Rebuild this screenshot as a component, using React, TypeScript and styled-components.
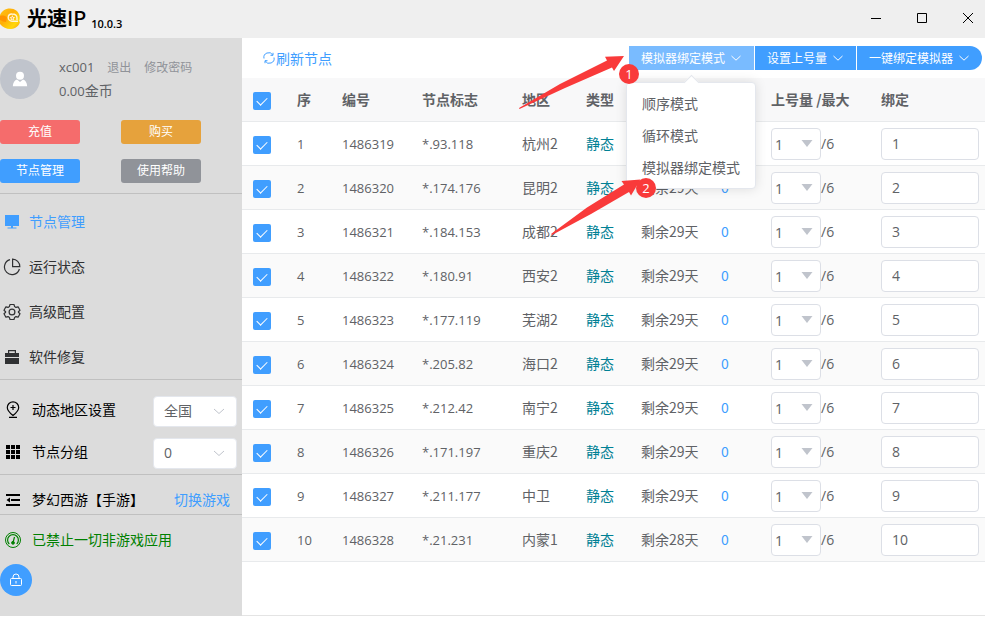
import React from "react";
import styled, { createGlobalStyle, css } from "styled-components";

const GlobalStyle = createGlobalStyle`
  * { box-sizing: border-box; }
  body {
    margin: 0;
    background: #fff;
    color: #606266;
    font: 14px/20px "Noto Sans CJK SC", sans-serif;
  }
  button, input, select { font: inherit; margin: 0; }
  button { cursor: pointer; }
`;

const LATIN = `"Open Sans", "Noto Sans CJK SC", sans-serif`;
const BLUE = "#409eff";

const Shell = styled.div`
  min-height: 100vh;
  display: flex;
  flex-direction: column;
  padding-bottom: 1px;
  position: relative;
`;

const TitleBar = styled.header`
  display: flex;
  justify-content: space-between;
  height: 38px;
  background: #efefef;
  color: #000;
`;

const Brand = styled.div`
  display: flex;
  align-items: flex-start;
  svg { display: block; margin: 8px 6px 0 0; }
`;

const AppName = styled.h1`
  margin: 0;
  font-size: 20px;
  line-height: 36px;
  font-weight: 700;
  span { font-weight: 500; }
`;

const Version = styled.small`
  align-self: flex-end;
  margin-left: 5px;
  padding-bottom: 4px;
  font: 600 11px/20px ${LATIN};
`;

const WindowButtons = styled.div`
  display: flex;
  margin-right: -6px;
  overflow: hidden;
`;

const WindowButton = styled.button`
  width: 46px;
  height: 36px;
  padding: 0;
  border: 0;
  background: none;
  display: grid;
  place-items: center;
`;

const Body = styled.div`
  flex: 1;
  display: flex;
`;

const Sidebar = styled.aside`
  width: 242px;
  flex: none;
  background: #dcdcdc;
  color: #000;
`;

const Section = styled.section<{ $top?: number }>`
  padding-top: ${(p) => p.$top ?? 0}px;
  border-bottom: 1px solid #c0c0c0;
`;

const Account = styled.div`
  display: flex;
  align-items: center;
  gap: 19px;
  height: 42px;
`;

const Avatar = styled.div`
  width: 40px;
  height: 40px;
  border-radius: 50%;
  background: #c0c4cc;
  display: grid;
  place-items: center;
`;

const AccountLine = styled.div`
  display: flex;
  align-items: center;
  height: 24px;
  font-family: ${LATIN};
  font-size: 13px;
  color: #606266;
  b { font-size: 14px; font-weight: 400; }
`;

const MutedLink = styled.a`
  margin-left: 13px;
  padding-top: 2px;
  font-size: 12px;
  color: #909399;
  text-decoration: none;
`;

const ActionGrid = styled.div`
  display: grid;
  grid-template-columns: 1fr 1fr;
  row-gap: 15px;
  padding: 20px 0 10px;
`;

const ActionButton = styled.button<{ $color: string }>`
  width: 80px;
  height: 24px;
  padding: 0 0 2px;
  border: 0;
  border-radius: 3px;
  background: ${(p) => p.$color};
  color: #fff;
  font-size: 12px;
  line-height: 22px;
`;

const Caption = styled.span`
  padding-bottom: 2px;
`;

const NavLink = styled.a<{ $active?: boolean }>`
  display: flex;
  align-items: center;
  gap: 8px;
  height: 45px;
  padding-left: 3px;
  color: ${(p) => (p.$active ? BLUE : "#303133")};
  text-decoration: none;
  svg { display: block; }
`;

const SettingRow = styled.div`
  display: flex;
  align-items: center;
  height: 42px;
  padding: 0 5px 0 4px;
`;

const RowLabel = styled.label`
  flex: 1;
  display: flex;
  align-items: center;
  gap: 10px;
  padding-bottom: 3px;
`;

const SelectBox = styled.span<{ $width: number; $height: number }>`
  display: inline-grid;
  width: ${(p) => p.$width}px;
  height: ${(p) => p.$height}px;
  align-items: center;
  > * { grid-area: 1 / 1; }
  svg { justify-self: end; pointer-events: none; }
`;

const Select = styled.select<{ $tight?: boolean }>`
  appearance: none;
  width: 100%;
  height: 100%;
  border: 1px solid ${(p) => (p.$tight ? "#dcdfe6" : "#e4e7ed")};
  border-radius: 4px;
  background: #fff;
  color: #606266;
  padding: ${(p) => (p.$tight ? "2px 0 0 3px" : "0 0 0 10px")};
  font-family: ${LATIN};
`;

const SmallChevron = styled.svg`
  margin-right: 12px;
`;

const Caret = styled.svg`
  margin: 0 8px 0 0;
`;

const Quota = styled.div`
  display: flex;
  align-items: center;
`;

const GameRow = styled.div`
  display: flex;
  align-items: center;
  gap: 10px;
  height: 28px;
  padding: 0 12px 0 4px;
  a { margin-left: auto; padding-bottom: 2px; color: ${BLUE}; text-decoration: none; }
`;

const StatusRow = styled.p`
  display: flex;
  align-items: center;
  gap: 10px;
  height: 49px;
  margin: 0;
  padding-left: 4px;
  color: #008000;
`;

const LockButton = styled.button`
  width: 32px;
  height: 32px;
  padding: 0;
  border: 0;
  border-radius: 50%;
  background: ${BLUE};
  display: grid;
  place-items: center;
`;

const Main = styled.main`
  flex: 1;
  min-width: 0;
  border-bottom: 1px solid #e4e4e4;
`;

const Toolbar = styled.div`
  display: flex;
  justify-content: space-between;
  align-items: center;
  height: 40px;
  padding: 0 3px 0 21px;
`;

const RefreshButton = styled.button`
  display: flex;
  align-items: center;
  gap: 1px;
  padding: 0;
  border: 0;
  background: none;
  color: ${BLUE};
`;

const Menus = styled.div`
  display: flex;
  gap: 1px;
`;

const MenuAnchor = styled.div`
  position: relative;
`;

const MenuButton = styled.button<{ $open?: boolean; $last?: boolean }>`
  display: flex;
  align-items: center;
  gap: 5px;
  height: 24px;
  padding: 0 12px;
  border: 0;
  border-radius: ${(p) => (p.$last ? "0 12px 12px 0" : "0")};
  background: ${(p) => (p.$open ? "#79bbff" : BLUE)};
  color: #fff;
  font-size: 12px;
  line-height: 24px;
  white-space: nowrap;
`;

const Popup = styled.ul`
  position: absolute;
  z-index: 2;
  top: 36px;
  left: -3px;
  margin: 0;
  padding: 4px 0 5px;
  list-style: none;
  background: #fff;
  border: 1px solid #e4e7ed;
  border-radius: 4px;
  box-shadow: 0 0 12px rgba(0, 0, 0, 0.12);
  &::before {
    content: "";
    position: absolute;
    top: -6px;
    left: 50%;
    width: 10px;
    height: 10px;
    margin-left: -5px;
    transform: rotate(45deg);
    background: #fff;
    border: solid #e4e7ed;
    border-width: 1px 0 0 1px;
  }
`;

const PopupItem = styled.button`
  display: block;
  position: relative;
  width: 100%;
  padding: 0 15px;
  border: 0;
  background: none;
  color: #606266;
  line-height: 32px;
  text-align: left;
  white-space: nowrap;
`;

const Table = styled.table`
  width: 100%;
  table-layout: fixed;
  border-collapse: separate;
  border-spacing: 0;
`;

const Column = styled.col<{ $width?: number }>`
  ${(p) => p.$width && css`width: ${p.$width}px;`}
`;

const Row = styled.tr<{ $striped?: boolean }>`
  height: 44px;
  background: ${(p) => (p.$striped ? "#fafafa" : "#fff")};
`;

const cell = css`
  padding: 0 0 2px 10px;
  border-bottom: 1px solid #e8eaec;
  text-align: left;
  white-space: nowrap;
  vertical-align: middle;
`;

const HeadCell = styled.th<{ $control?: boolean }>`
  ${cell}
  ${(p) => p.$control && css`padding-bottom: 0;`}
  background: #f8f8f9;
  font-weight: 700;
`;

const Cell = styled.td<{ $tone?: string; $number?: boolean; $control?: boolean }>`
  ${cell}
  ${(p) => p.$number && css`font: 13px/20px ${LATIN}; padding-bottom: 0;`}
  ${(p) => p.$control && css`font-family: ${LATIN}; padding-bottom: 0;`}
  color: ${(p) => p.$tone ?? "#606266"};
`;

const Check = styled.input`
  appearance: none;
  display: grid;
  place-items: center;
  width: 18px;
  height: 18px;
  margin: 2px 0 0 1px;
  border-radius: 2px;
  background: ${BLUE};
  &::after {
    content: "";
    width: 5px;
    height: 9px;
    margin-top: -2px;
    border: solid #fff;
    border-width: 0 1px 1px 0;
    transform: rotate(45deg);
  }
`;

const BindInput = styled.input`
  display: block;
  width: calc(100% - 6px);
  height: 32px;
  padding: 0 10px;
  border: 1px solid #dcdfe6;
  border-radius: 4px;
  background: #fff;
  color: #606266;
  font-family: ${LATIN};
`;

const Arrows = styled.svg`
  position: absolute;
  z-index: 3;
  top: 0;
  left: 0;
  pointer-events: none;
`;

const Badge = styled.span<{ $x: number; $y: number }>`
  position: absolute;
  z-index: 4;
  left: ${(p) => p.$x}px;
  top: ${(p) => p.$y}px;
  width: 20px;
  height: 20px;
  border-radius: 50%;
  background: #f93a3a;
  color: #fff;
  font: 13px/20px ${LATIN};
  text-align: center;
`;

const stroke = { fill: "none", stroke: "currentColor" } as const;

const Logo = () => (
  <svg width="21" height="22" viewBox="0 0 21 22" aria-hidden="true">
    <defs>
      <linearGradient id="gold" x1="0" y1="0" x2="1" y2="1">
        <stop offset="0" stopColor="#ffc414" />
        <stop offset=".4" stopColor="#ffae08" />
        <stop offset=".75" stopColor="#ffd80a" />
        <stop offset="1" stopColor="#ff9410" />
      </linearGradient>
    </defs>
    <path d="M0 7C2 3 5 .5 10 .5c5 0 8.500 3 9.500 7 .4 2 .3 4-.5 6h1c-.5 4-4 7-9 7.500-4 .3-8-1.500-11-5Z" fill="url(#gold)" />
    <path d="M0 8c3-1 5-.5 7 1.500L6 14c-2 0-4-1-6-2Z" fill="#ff9300" />
    <path d="M18 13.200h-6a3.800 3.800 0 0 1-3.800-3.700A3.700 3.700 0 0 1 12 6c3.200 0 5 1.200 5 4v2" fill="none" stroke="#fff4d6" strokeWidth="1.400" />
    <path d="m12.300 7 .9 1.900 2 .3-1.500 1.300.4 2-1.800-1-1.800 1 .4-2-1.500-1.300 2-.3Z" fill="#fff4d6" />
    <circle cx="12.300" cy="10" r=".8" fill="#ff9c08" />
  </svg>
);

const UserGlyph = () => (
  <svg width="16" height="16" viewBox="0 0 16 16" fill="#fff" aria-hidden="true">
    <circle cx="8" cy="4.800" r="4" />
    <path d="M5 8.500 8 11l3-2.500c2.300.6 4 3.200 4.200 6.700H.8C1 11.700 2.700 9.100 5 8.500Z" />
  </svg>
);

const MonitorIcon = () => (
  <svg width="18" height="18" viewBox="0 0 18 18" fill="currentColor" aria-hidden="true">
    <path d="M2 2h14v11H2zM8 13h2v1.500h3.500v1h-9v-1H8z" />
  </svg>
);

const PieIcon = () => (
  <svg width="18" height="18" viewBox="0 0 18 18" {...stroke} strokeWidth="1.200" aria-hidden="true">
    <path d="M7 1.700A7.600 7.600 0 1 0 16.400 11" />
    <path d="M9.600 1.200v7.400h7.200A7.400 7.400 0 0 0 9.600 1.200Z" />
  </svg>
);

const GearIcon = () => (
  <svg width="18" height="18" viewBox="0 0 18 18" {...stroke} strokeWidth="1.200" strokeLinejoin="round" aria-hidden="true">
    <path d="M7 1.500h4l.6 2.100 1.300.8 2.200-.6 1.900 3.400-1.600 1.500v.6l1.600 1.500-1.900 3.400-2.200-.6-1.300.8-.6 2.100H7l-.6-2.100-1.300-.8-2.200.6L1 10.800l1.600-1.500v-.6L1 7.200l1.900-3.400 2.200.6 1.300-.8Z" />
    <circle cx="9" cy="9" r="2.900" />
  </svg>
);

const CaseIcon = () => (
  <svg width="18" height="18" viewBox="0 0 18 18" fill="currentColor" aria-hidden="true">
    <path d="M5 5V2h8v3h3v4H2V5Zm1.200 0h5.600V3.200H6.200ZM2 10h14v6H2z" />
  </svg>
);

const PinIcon = () => (
  <svg width="18" height="18" viewBox="0 0 18 18" {...stroke} strokeWidth="1.200" aria-hidden="true">
    <path d="M9 14.500C5.500 11.700 3.300 9.300 3.300 6.500a5.700 5.700 0 0 1 11.400 0c0 2.800-2.200 5.200-5.700 8ZM9 4v5M6.500 6.500h5M5 16.400h8" />
  </svg>
);

const GridIcon = () => (
  <svg width="18" height="18" viewBox="0 0 18 18" fill="currentColor" aria-hidden="true">
    {[2, 7, 12].map((y) => [2, 7, 12].map((x) => <rect key={`${x}-${y}`} x={x} y={y} width="4" height="4" />))}
  </svg>
);

const FoldIcon = () => (
  <svg width="18" height="18" viewBox="0 0 18 18" fill="currentColor" aria-hidden="true">
    <path d="M2 3h14v2H2zM7 8h9v2H7zM2 13h14v2H2zM2.500 9 6 6.500v5Z" />
  </svg>
);

const GaugeIcon = () => (
  <svg width="18" height="18" viewBox="0 0 18 18" {...stroke} aria-hidden="true">
    <circle cx="9" cy="9" r="7.500" />
    <path d="M5.300 13A5.400 5.400 0 1 1 12.700 13M9.300 10.500 10.500 6" strokeWidth="1.200" />
    <circle cx="9" cy="11.800" r="1.400" fill="currentColor" />
  </svg>
);

const LockIcon = () => (
  <svg width="14" height="14" viewBox="0 0 14 14" fill="none" stroke="#fff" aria-hidden="true">
    <rect x="1.500" y="5.500" width="11" height="7" rx="1" />
    <path d="M4 5.500V4a3 3 0 0 1 6 0v1.500M7 8v2.500" />
  </svg>
);

const RefreshIcon = () => (
  <svg width="12" height="12" viewBox="0 0 12 12" {...stroke} aria-hidden="true">
    <path d="M1 6.500A4.800 4.800 0 0 1 9.800 3M11 5.500A4.800 4.800 0 0 1 2.200 9M10 .8V3.300H7.500M2 11.200V8.700h2.500" />
  </svg>
);

const ChevronIcon = () => (
  <svg width="12" height="12" viewBox="0 0 12 12" {...stroke} aria-hidden="true">
    <path d="m1.500 4 4.500 4.200L10.500 4" />
  </svg>
);

const navItems = [
  { label: "节点管理", Icon: MonitorIcon, active: true },
  { label: "运行状态", Icon: PieIcon },
  { label: "高级配置", Icon: GearIcon },
  { label: "软件修复", Icon: CaseIcon },
];

const actions = [
  ["充值", "#f56c6c"],
  ["购买", "#e6a23c"],
  ["节点管理", BLUE],
  ["使用帮助", "#909399"],
];

const columnWidths = [45, 45, 80, 100, 64, 55, 80, 50, 110, undefined];
const headings = ["序", "编号", "节点标志", "地区", "类型", "", "", "上号量 /最大", "绑定"];

const nodes = [
  ["1486319", "*.93.118", "杭州2", 29],
  ["1486320", "*.174.176", "昆明2", 29],
  ["1486321", "*.184.153", "成都2", 29],
  ["1486322", "*.180.91", "西安2", 29],
  ["1486323", "*.177.119", "芜湖2", 29],
  ["1486324", "*.205.82", "海口2", 29],
  ["1486325", "*.212.42", "南宁2", 29],
  ["1486326", "*.171.197", "重庆2", 29],
  ["1486327", "*.211.177", "中卫", 29],
  ["1486328", "*.21.231", "内蒙1", 28],
] as const;

function SideSelect({ id, value }: { id: string; value: string }) {
  return (
    <SelectBox $width={84} $height={31}>
      <Select id={id} defaultValue={value}>
        <option>{value}</option>
      </Select>
      <SmallChevron width="12" height="12" viewBox="0 0 12 12" fill="none" stroke="#c0c4cc" aria-hidden="true">
        <path d="m1 4 5 4.500L11 4" />
      </SmallChevron>
    </SelectBox>
  );
}

function NodeRow({ index }: { index: number }) {
  const [code, mark, area, days] = nodes[index];
  const order = index + 1;
  return (
    <Row $striped={index % 2 === 1}>
      <Cell $control><Check type="checkbox" defaultChecked aria-label={`选择 ${code}`} /></Cell>
      <Cell $number>{order}</Cell>
      <Cell $number>{code}</Cell>
      <Cell $number>{mark}</Cell>
      <Cell>{area}</Cell>
      <Cell $tone="#008094">静态</Cell>
      <Cell>剩余{days}天</Cell>
      <Cell $tone={BLUE}>0</Cell>
      <Cell $control>
        <Quota>
          <SelectBox $width={50} $height={32}>
            <Select $tight defaultValue="1" aria-label={`上号量 ${code}`}>
              {[1, 2, 3, 4, 5, 6].map((n) => <option key={n}>{n}</option>)}
            </Select>
            <Caret width="12" height="8" viewBox="0 0 12 8" fill="#c0c4cc" aria-hidden="true">
              <path d="M.5 0h11L6 7Z" />
            </Caret>
          </SelectBox>
          /6
        </Quota>
      </Cell>
      <Cell $control><BindInput defaultValue={order} aria-label={`绑定 ${code}`} /></Cell>
    </Row>
  );
}

export default function App() {
  return (
    <Shell>
      <GlobalStyle />
      <TitleBar>
        <Brand>
          <Logo />
          <AppName>光速<span>IP</span></AppName>
          <Version>10.0.3</Version>
        </Brand>
        <WindowButtons>
          <WindowButton aria-label="最小化">
            <svg width="12" height="12" viewBox="0 0 12 12"><path d="M1 6.500h10" stroke="#000" /></svg>
          </WindowButton>
          <WindowButton aria-label="最大化">
            <svg width="12" height="12" viewBox="0 0 12 12"><path d="M1.500 1.500h9v9h-9z" fill="none" stroke="#000" /></svg>
          </WindowButton>
          <WindowButton aria-label="关闭">
            <svg width="12" height="12" viewBox="0 0 12 12"><path d="m1 1 10 10M11 1 1 11" stroke="#000" /></svg>
          </WindowButton>
        </WindowButtons>
      </TitleBar>
      <Body>
        <Sidebar>
          <Section $top={20}>
            <Account>
              <Avatar><UserGlyph /></Avatar>
              <div>
                <AccountLine>
                  xc001<MutedLink href="#logout">退出</MutedLink>
                  <MutedLink href="#password">修改密码</MutedLink>
                </AccountLine>
                <AccountLine>0.00<b>金币</b></AccountLine>
              </div>
            </Account>
            <ActionGrid>
              {actions.map(([label, color]) => (
                <ActionButton key={label} $color={color}>{label}</ActionButton>
              ))}
            </ActionGrid>
          </Section>
          <Section as="nav" $top={5}>
            {navItems.map(({ label, Icon, active }) => (
              <NavLink key={label} href="#" $active={active}><Icon /><Caption>{label}</Caption></NavLink>
            ))}
          </Section>
          <Section $top={10}>
            <SettingRow>
              <RowLabel htmlFor="area"><PinIcon /><Caption>动态地区设置</Caption></RowLabel>
              <SideSelect id="area" value="全国" />
            </SettingRow>
            <SettingRow>
              <RowLabel htmlFor="group"><GridIcon /><Caption>节点分组</Caption></RowLabel>
              <SideSelect id="group" value="0" />
            </SettingRow>
          </Section>
          <Section $top={11}>
            <GameRow><FoldIcon /><Caption>梦幻西游【手游】</Caption><a href="#game">切换游戏</a></GameRow>
          </Section>
          <StatusRow><GaugeIcon /><Caption>已禁止一切非游戏应用</Caption></StatusRow>
          <LockButton aria-label="锁定"><LockIcon /></LockButton>
        </Sidebar>
        <Main>
          <Toolbar>
            <RefreshButton><RefreshIcon />刷新节点</RefreshButton>
            <Menus>
              <MenuAnchor>
                <MenuButton $open aria-expanded="true">模拟器绑定模式<ChevronIcon /></MenuButton>
                <Popup>
                  {["顺序模式", "循环模式", "模拟器绑定模式"].map((mode) => (
                    <li key={mode}><PopupItem>{mode}</PopupItem></li>
                  ))}
                </Popup>
              </MenuAnchor>
              <MenuButton>设置上号量<ChevronIcon /></MenuButton>
              <MenuButton $last>一键绑定模拟器<ChevronIcon /></MenuButton>
            </Menus>
          </Toolbar>
          <Table>
            <colgroup>
              {columnWidths.map((width, i) => <Column key={i} $width={width} />)}
            </colgroup>
            <thead>
              <Row>
                <HeadCell $control><Check type="checkbox" defaultChecked aria-label="全选" /></HeadCell>
                {headings.map((text, i) => <HeadCell key={i}>{text}</HeadCell>)}
              </Row>
            </thead>
            <tbody>
              {nodes.map((node, i) => <NodeRow key={node[0]} index={i} />)}
            </tbody>
          </Table>
        </Main>
      </Body>
      <Arrows width="760" height="250" viewBox="0 0 760 250" fill="#f93a3a" aria-hidden="true">
        <path d="M519 108 560 84 607 60.500 605 56.700 624 56 614 71 612 67.500 565 88 519.500 109Z" />
        <path d="M551 234 587 207.500 624 184.500 621.500 181 640.500 179.500 631 195.500 629 192 591 214 552 235Z" />
      </Arrows>
      <Badge $x={619} $y={64}>1</Badge>
      <Badge $x={636} $y={178}>2</Badge>
    </Shell>
  );
}
